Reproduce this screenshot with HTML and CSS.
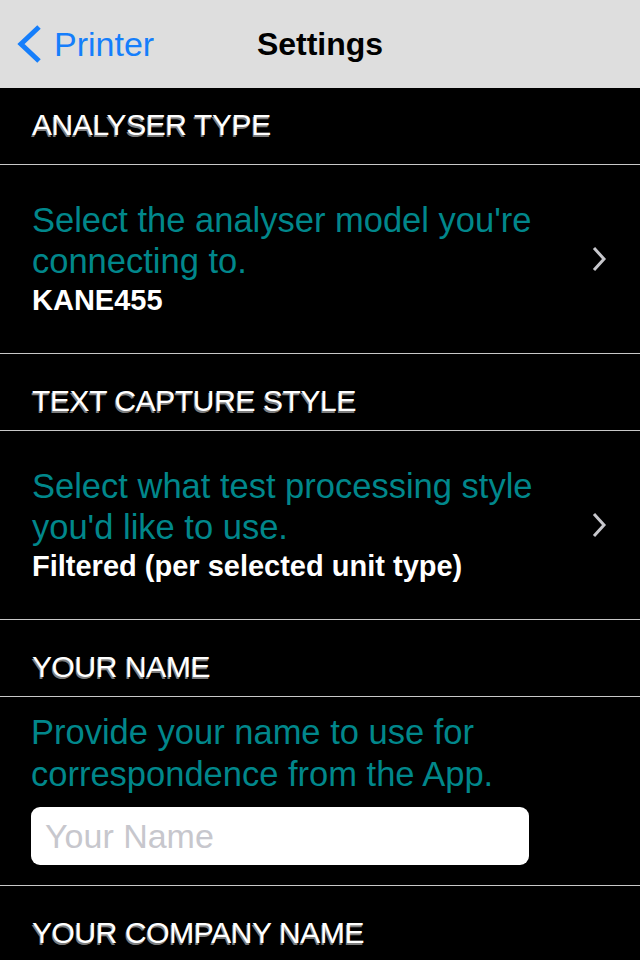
FILE: index.html
```html
<!DOCTYPE html>
<html lang="en">
<head>
    <meta charset="UTF-8">
    <meta name="viewport" content="width=device-width, initial-scale=1.0">
    <title>Settings</title>
    <link rel="stylesheet" href="styles.css">
</head>
<body>
    <div class="navbar">
        <a class="back" href="#">
            <svg class="back-icon" width="28" height="40" viewBox="0 0 28 40">
                <polyline points="24,3 6,20 24,37" fill="none" stroke="#157efb" stroke-width="5" stroke-linecap="butt" stroke-linejoin="miter"/>
            </svg>
            <span>Printer</span>
        </a>
        <h1 class="title">Settings</h1>
    </div>

    <div class="table">
        <div class="section-head first">ANALYSER TYPE</div>
        <div class="cell link">
            <div class="cell-text">
                <p class="hint">Select the analyser model you're<br>connecting to.</p>
                <p class="value">KANE455</p>
            </div>
            <svg class="chevron" width="16" height="26" viewBox="0 0 16 26">
                <polyline points="3,2 13,13 3,24" fill="none" stroke="#c7c7cc" stroke-width="3"/>
            </svg>
        </div>

        <div class="section-head">TEXT CAPTURE STYLE</div>
        <div class="cell link">
            <div class="cell-text">
                <p class="hint">Select what test processing style<br>you'd like to use.</p>
                <p class="value">Filtered (per selected unit type)</p>
            </div>
            <svg class="chevron" width="16" height="26" viewBox="0 0 16 26">
                <polyline points="3,2 13,13 3,24" fill="none" stroke="#c7c7cc" stroke-width="3"/>
            </svg>
        </div>

        <div class="section-head">YOUR NAME</div>
        <div class="cell field">
            <p class="hint">Provide your name to use for<br>correspondence from the App.</p>
            <input type="text" class="text-input" placeholder="Your Name">
        </div>

        <div class="section-head">YOUR COMPANY NAME</div>
    </div>
</body>
</html>
```

FILE: styles.css
```css
body {
    margin: 0;
    background-color: #000000;
    font-family: "Liberation Sans", Arial, sans-serif;
    width: 640px;
    height: 960px;
    overflow: hidden;
}
.navbar {
    height: 88px;
    background-color: #dedede;
    display: flex;
    align-items: center;
    justify-content: center;
    position: relative;
}
.back {
    position: absolute;
    left: 15px;
    top: 24px;
    display: flex;
    align-items: center;
    gap: 11px;
    color: #157efb;
    text-decoration: none;
    font-size: 34px;
}
.title {
    margin: 0;
    font-size: 32px;
    font-weight: bold;
    color: #000000;
}
.section-head {
    height: 77px;
    box-sizing: border-box;
    padding: 32px 32px 0;
    font-size: 30px;
    line-height: 30px;
    letter-spacing: -0.4px;
    color: #ffffff;
    text-shadow: -1px 2px 0 #7d7d7d;
    border-bottom: 1px solid #c8c8c8;
}
.section-head.first {
    padding-top: 22px;
}
.cell {
    border-bottom: 1px solid #c8c8c8;
    box-sizing: border-box;
}
.cell.link {
    height: 189px;
    display: flex;
    align-items: center;
    justify-content: space-between;
    padding: 0 33px 0 32px;
}
.hint {
    margin: 0;
    font-size: 34.5px;
    line-height: 41px;
    color: #01878b;
}
.value {
    margin: 0;
    font-size: 29px;
    line-height: 37px;
    font-weight: bold;
    color: #ffffff;
}
.cell.field {
    height: 189px;
    padding: 14px 32px 0 31px;
}
.cell.field .hint {
    line-height: 42px;
}
.text-input {
    display: block;
    width: 498px;
    height: 58px;
    margin-top: 12px;
    box-sizing: border-box;
    border: none;
    border-radius: 9px;
    background-color: #ffffff;
    padding: 0 14px;
    font-family: "Liberation Sans", Arial, sans-serif;
    font-size: 34px;
    color: #000000;
}
.text-input::placeholder {
    color: #c7c7cd;
}
```
